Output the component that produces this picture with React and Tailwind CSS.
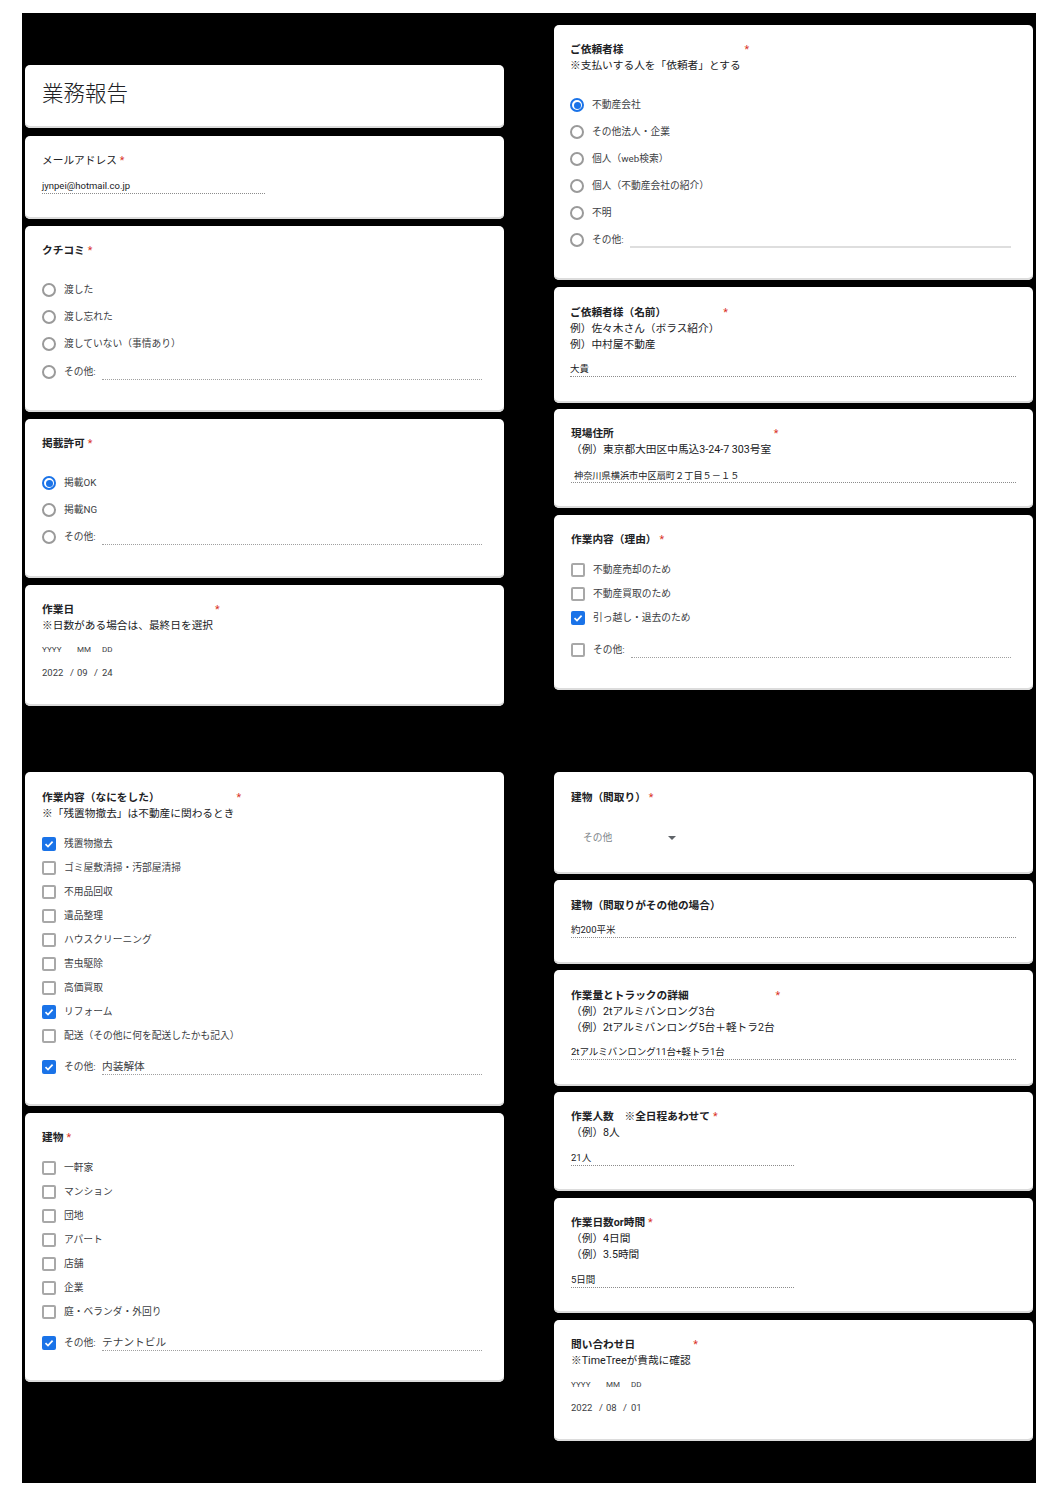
const FONT = "font-['Roboto','Noto_Sans_CJK_JP',sans-serif]";

function Card({ className = "", children }) {
  return (
    <section className={`rounded-[5px] bg-white pl-[17px] pr-[17px] shadow-[inset_0_-2px_0_#dcdcdc] ${className}`}>
      {children}
    </section>
  );
}

function Title({ text, star, weight = "font-bold" }) {
  return (
    <div className={`h-4 whitespace-nowrap text-[10.7px] leading-[17px] text-[#202124] ${weight}`}>
      {text}
      <span className={`font-normal text-[#d93025] ${star}`}>*</span>
    </div>
  );
}

function Desc({ children }) {
  return <div className="h-4 whitespace-nowrap text-[10.7px] leading-[17px] text-[#202124]">{children}</div>;
}

function Field({ value, className = "" }) {
  return (
    <div className={`h-4 whitespace-nowrap border-b border-dotted border-[#8c8c8c] text-[9.5px] leading-[15px] text-[#202124] ${className}`}>
      {value}
    </div>
  );
}

function Radio({ checked }) {
  if (checked) {
    return (
      <span className="flex h-[14px] w-[14px] shrink-0 items-center justify-center rounded-full border-2 border-[#1a73e8]">
        <span className="h-[7px] w-[7px] rounded-full bg-[#1a73e8]" />
      </span>
    );
  }
  return <span className="h-[14px] w-[14px] shrink-0 rounded-full border-2 border-[#9a9a9a]" />;
}

function Check({ checked }) {
  if (checked) {
    return (
      <span className="flex h-[14px] w-[14px] shrink-0 items-center justify-center rounded-[2px] bg-[#1a73e8]">
        <svg width="10" height="10" viewBox="0 0 10 10" fill="none">
          <path d="M1.5 5.2 L4 7.6 L8.6 2.6" stroke="#fff" strokeWidth="1.7" />
        </svg>
      </span>
    );
  }
  return <span className="h-[14px] w-[14px] shrink-0 rounded-[2px] border-2 border-[#a8a8a8]" />;
}

function Option({ kind, label, checked }) {
  const isRadio = kind === "radio";
  return (
    <div className={`flex items-center gap-2 whitespace-nowrap text-[9.75px] text-[#3c4043] ${isRadio ? "h-[27px]" : "h-6"}`}>
      {isRadio ? <Radio checked={checked} /> : <Check checked={checked} />}
      <span className={isRadio ? "pt-px" : ""}>{label}</span>
    </div>
  );
}

function Other({ kind, value, checked, className = "", line = "border-b border-dotted border-[#a0a0a0]" }) {
  const isRadio = kind === "radio";
  return (
    <div className={`flex items-center gap-2 pr-[5px] text-[9.75px] text-[#3c4043] ${isRadio ? "h-[27px]" : "h-6"} ${className}`}>
      {isRadio ? <Radio checked={checked} /> : <Check checked={checked} />}
      <span className="w-[30px] shrink-0 whitespace-nowrap">その他:</span>
      <div className={`h-4 flex-1 text-[10.7px] leading-[15px] text-[#3c4043] ${line}`}>{value}</div>
    </div>
  );
}

function DateBlock({ y, m, d }) {
  return (
    <>
      <div className="mt-[9px] flex h-4 items-center text-[8px] leading-4 text-[#3c4043]">
        <span className="w-[35px]">YYYY</span>
        <span className="w-[25px]">MM</span>
        <span>DD</span>
      </div>
      <div className="mt-[7px] flex h-4 items-center text-[9.5px] leading-4 text-[#3c4043]">
        <span className="w-[28px]">{y}</span>
        <span className="w-[7px]">/</span>
        <span className="w-[17px]">{m}</span>
        <span className="w-[8px]">/</span>
        <span>{d}</span>
      </div>
    </>
  );
}

export default function App() {
  return (
    <div className={`min-h-[1495px] bg-white pl-[22px] pr-[22px] pt-[13px] ${FONT}`}>
      <main className="grid h-[1470px] w-[1014px] grid-cols-[479px_479px] grid-rows-[759px_auto] gap-x-[50px] bg-black px-[3px]">
        <div className="flex flex-col pt-[52px]">
          <Card className="h-[63px] pt-[14px]">
            <h1 className="text-[21.5px] font-light leading-[30px] text-[#202124]">業務報告</h1>
          </Card>
          <Card className="mt-2 h-[83px] pt-4">
            <Title text="メールアドレス" star="ml-[3px]" weight="font-normal" />
            <Field value="jynpei@hotmail.co.jp" className="mt-[10px] w-[223px]" />
          </Card>
          <Card className="mt-[7px] h-[186px] pt-4">
            <Title text="クチコミ" star="ml-[3px]" />
            <div className="mt-[18.5px]">
              <Option kind="radio" label="渡した" />
              <Option kind="radio" label="渡し忘れた" />
              <Option kind="radio" label="渡していない（事情あり）" />
              <Other kind="radio" className="mt-px" />
            </div>
          </Card>
          <Card className="mt-[7px] h-[159px] pt-4">
            <Title text="掲載許可" star="ml-[3px]" />
            <div className="mt-[18.5px]">
              <Option kind="radio" label="掲載OK" checked />
              <Option kind="radio" label="掲載NG" />
              <Other kind="radio" />
            </div>
          </Card>
          <Card className="mt-[7px] h-[121px] pt-4">
            <Title text="作業日" star="ml-[141px]" />
            <Desc>※日数がある場合は、最終日を選択</Desc>
            <DateBlock y="2022" m="09" d="24" />
          </Card>
        </div>

        <div className="flex flex-col pt-3">
          <Card className="h-[255px] pt-4 !pl-4">
            <Title text="ご依頼者様" star="ml-[121px]" />
            <Desc>※支払いする人を「依頼者」とする</Desc>
            <div className="mt-[18.5px]">
              <Option kind="radio" label="不動産会社" checked />
              <Option kind="radio" label="その他法人・企業" />
              <Option kind="radio" label="個人（web検索）" />
              <Option kind="radio" label="個人（不動産会社の紹介）" />
              <Option kind="radio" label="不明" />
              <Other kind="radio" line="border-b-2 border-[#dedede]" />
            </div>
          </Card>
          <Card className="mt-[7px] h-[116px] pt-[17px] !pl-4">
            <Title text="ご依頼者様（名前）" star="ml-[57px]" />
            <Desc>例）佐々木さん（ボラス紹介）</Desc>
            <Desc>例）中村屋不動産</Desc>
            <Field value="大貴" className="mt-[9px]" />
          </Card>
          <Card className="mt-[6px] h-[99px] pt-4">
            <Title text="現場住所" star="ml-[160px]" />
            <Desc>（例）東京都大田区中馬込3-24-7 303号室</Desc>
            <Field value="神奈川県横浜市中区扇町２丁目５－１５" className="mt-[10px] pl-[3px] !text-[9.2px] !leading-[18px]" />
          </Card>
          <Card className="mt-[7px] h-[175px] pt-4">
            <Title text="作業内容（理由）" star="ml-[3px]" />
            <div className="mt-[11px]">
              <Option kind="check" label="不動産売却のため" />
              <Option kind="check" label="不動産買取のため" />
              <Option kind="check" label="引っ越し・退去のため" checked />
              <Other kind="check" className="mt-2" />
            </div>
          </Card>
        </div>

        <div className="flex flex-col">
          <Card className="h-[334px] pt-[17px]">
            <Title text="作業内容（なにをした）" star="ml-[77px]" />
            <Desc>※「残置物撤去」は不動産に関わるとき</Desc>
            <div className="mt-[11px]">
              <Option kind="check" label="残置物撤去" checked />
              <Option kind="check" label="ゴミ屋敷清掃・汚部屋清掃" />
              <Option kind="check" label="不用品回収" />
              <Option kind="check" label="遺品整理" />
              <Option kind="check" label="ハウスクリーニング" />
              <Option kind="check" label="害虫駆除" />
              <Option kind="check" label="高価買取" />
              <Option kind="check" label="リフォーム" checked />
              <Option kind="check" label="配送（その他に何を配送したかも記入）" />
              <Other kind="check" value="内装解体" checked className="mt-[7px]" />
            </div>
          </Card>
          <Card className="mt-[7px] h-[269px] pt-4">
            <Title text="建物" star="ml-[3px]" />
            <div className="mt-[11px]">
              <Option kind="check" label="一軒家" />
              <Option kind="check" label="マンション" />
              <Option kind="check" label="団地" />
              <Option kind="check" label="アパート" />
              <Option kind="check" label="店舗" />
              <Option kind="check" label="企業" />
              <Option kind="check" label="庭・ベランダ・外回り" />
              <Other kind="check" value="テナントビル" checked className="mt-[7px]" />
            </div>
          </Card>
        </div>

        <div className="flex flex-col">
          <Card className="h-[102px] pt-[17px]">
            <Title text="建物（間取り）" star="ml-[3px]" />
            <div className="mt-[25px] flex h-4 items-center pl-3 text-[9.75px] text-[#80868b]">
              <span className="w-[85px]">その他</span>
              <span className="h-0 w-0 border-x-4 border-t-4 border-x-transparent border-t-[#5f6368]" />
            </div>
          </Card>
          <Card className="mt-[6px] h-[84px] pt-[17px]">
            <div className="h-4 whitespace-nowrap text-[10.7px] font-bold leading-[17px] text-[#202124]">建物（間取りがその他の場合）</div>
            <Field value="約200平米" className="mt-[9px]" />
          </Card>
          <Card className="mt-[6px] h-[116px] pt-[17px]">
            <Title text="作業量とトラックの詳細" star="ml-[87px]" />
            <Desc>（例）2tアルミバンロング3台</Desc>
            <Desc>（例）2tアルミバンロング5台＋軽トラ2台</Desc>
            <Field value="2tアルミバンロング11台+軽トラ1台" className="mt-[9px]" />
          </Card>
          <Card className="mt-[6px] h-[99px] pt-4">
            <Title text="作業人数　※全日程あわせて" star="ml-[3px]" />
            <Desc>（例）8人</Desc>
            <Field value="21人" className="mt-[10px] w-[223px]" />
          </Card>
          <Card className="mt-[7px] h-[115px] pt-4">
            <Title text="作業日数or時間" star="ml-[3px]" />
            <Desc>（例）4日間</Desc>
            <Desc>（例）3.5時間</Desc>
            <Field value="5日間" className="mt-[10px] w-[223px]" />
          </Card>
          <Card className="mt-[7px] h-[121px] pt-4">
            <Title text="問い合わせ日" star="ml-[58px]" />
            <Desc>※TimeTreeが貴哉に確認</Desc>
            <DateBlock y="2022" m="08" d="01" />
          </Card>
        </div>
      </main>
    </div>
  );
}
